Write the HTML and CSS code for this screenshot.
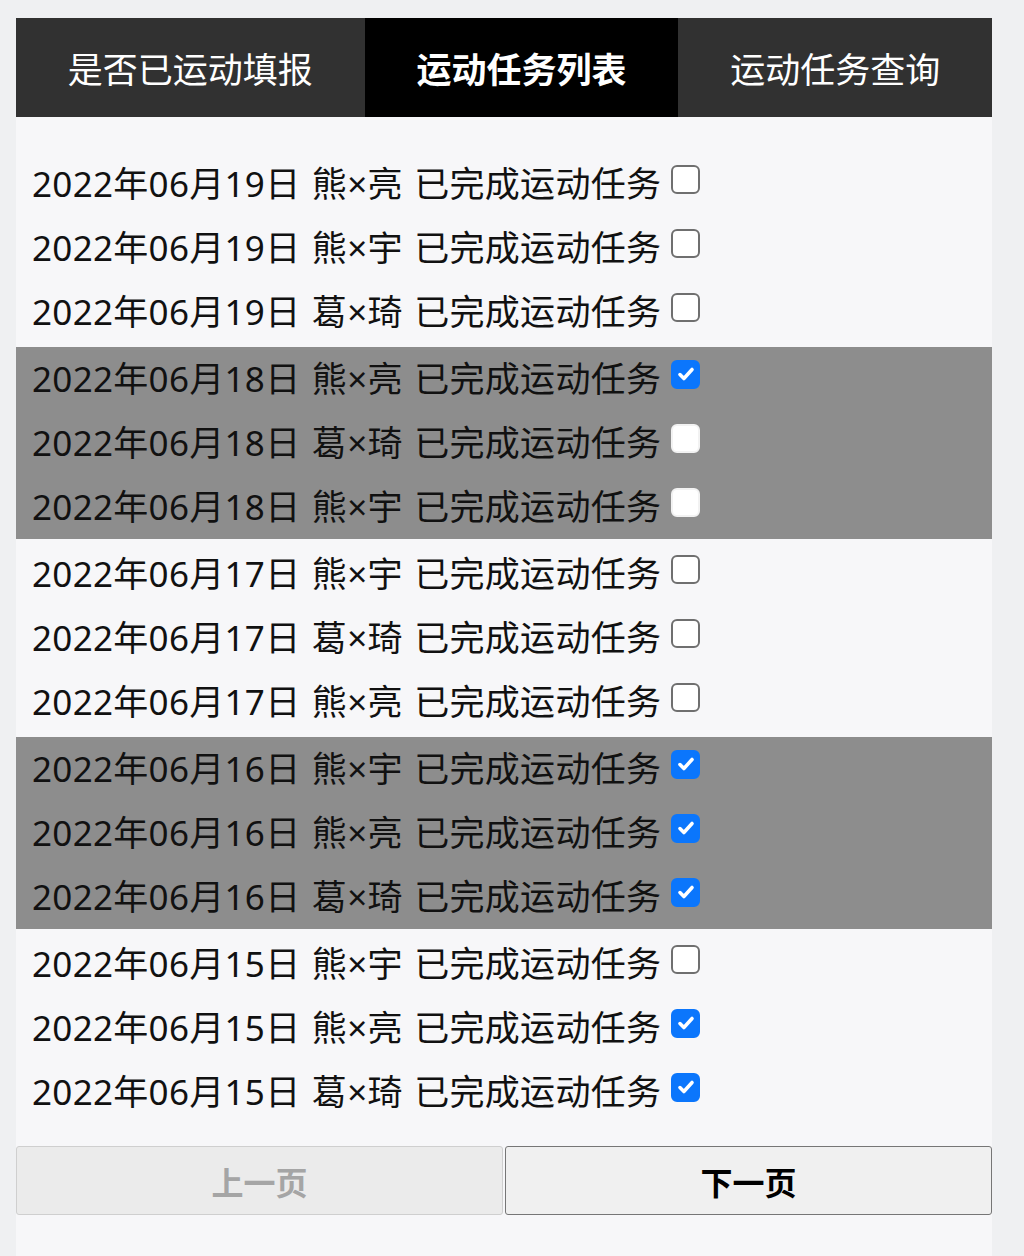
FILE: index.html
```html
<!DOCTYPE html>
<html lang="zh-CN">
<head>
<meta charset="utf-8">
<title>运动任务列表</title>
<link rel="stylesheet" href="styles.css">
</head>
<body>
<div class="app">
  <nav class="tabs">
    <div class="tab">是否已运动填报</div>
    <div class="tab active">运动任务列表</div>
    <div class="tab">运动任务查询</div>
  </nav>
  <div class="list">
    <div class="group">
      <div class="row"><span>2022年06月19日 熊×亮 已完成运动任务</span><span class="box"></span></div>
      <div class="row"><span>2022年06月19日 熊×宇 已完成运动任务</span><span class="box"></span></div>
      <div class="row"><span>2022年06月19日 葛×琦 已完成运动任务</span><span class="box"></span></div>
    </div>
    <div class="group shaded">
      <div class="row"><span>2022年06月18日 熊×亮 已完成运动任务</span><span class="box checked"><svg viewBox="0 0 20 20"><path d="M4.5 10.5l3.6 3.6 7.4-8.2" /></svg></span></div>
      <div class="row"><span>2022年06月18日 葛×琦 已完成运动任务</span><span class="box"></span></div>
      <div class="row"><span>2022年06月18日 熊×宇 已完成运动任务</span><span class="box"></span></div>
    </div>
    <div class="group">
      <div class="row"><span>2022年06月17日 熊×宇 已完成运动任务</span><span class="box"></span></div>
      <div class="row"><span>2022年06月17日 葛×琦 已完成运动任务</span><span class="box"></span></div>
      <div class="row"><span>2022年06月17日 熊×亮 已完成运动任务</span><span class="box"></span></div>
    </div>
    <div class="group shaded">
      <div class="row"><span>2022年06月16日 熊×宇 已完成运动任务</span><span class="box checked"><svg viewBox="0 0 20 20"><path d="M4.5 10.5l3.6 3.6 7.4-8.2" /></svg></span></div>
      <div class="row"><span>2022年06月16日 熊×亮 已完成运动任务</span><span class="box checked"><svg viewBox="0 0 20 20"><path d="M4.5 10.5l3.6 3.6 7.4-8.2" /></svg></span></div>
      <div class="row"><span>2022年06月16日 葛×琦 已完成运动任务</span><span class="box checked"><svg viewBox="0 0 20 20"><path d="M4.5 10.5l3.6 3.6 7.4-8.2" /></svg></span></div>
    </div>
    <div class="group">
      <div class="row"><span>2022年06月15日 熊×宇 已完成运动任务</span><span class="box"></span></div>
      <div class="row"><span>2022年06月15日 熊×亮 已完成运动任务</span><span class="box checked"><svg viewBox="0 0 20 20"><path d="M4.5 10.5l3.6 3.6 7.4-8.2" /></svg></span></div>
      <div class="row"><span>2022年06月15日 葛×琦 已完成运动任务</span><span class="box checked"><svg viewBox="0 0 20 20"><path d="M4.5 10.5l3.6 3.6 7.4-8.2" /></svg></span></div>
    </div>
  </div>
  <div class="pager">
    <button class="btn" disabled>上一页</button>
    <button class="btn">下一页</button>
  </div>
</div>
</body>
</html>
```
FILE: styles.css
```css
html, body {
  margin: 0;
  padding: 0;
  background: #eff0f2;
}
body {
  padding: 18px 32px 0 16px;
  font-family: "Noto Sans", "Noto Sans CJK SC", sans-serif;
  color: #111;
}
.app {
  background: #f7f7f9;
  min-height: 1238px;
  padding-bottom: 41px;
  box-sizing: border-box;
}
.tabs {
  display: flex;
  height: 99px;
  background: #333;
}
.tab {
  flex: 1 1 auto;
  padding: 0 50px;
  display: flex;
  align-items: center;
  justify-content: center;
  color: #fff;
  font-size: 35px;
  font-family: "Noto Sans CJK SC", sans-serif;
  background: #313131;
  white-space: nowrap;
}
.tab.active {
  background: #000;
  font-weight: 700;
}
.list {
  display: flex;
  flex-direction: column;
  gap: 3px;
  padding-top: 35px;
}
.group.shaded {
  background: #8d8d8d;
}
.row {
  height: 64px;
  box-sizing: border-box;
  display: flex;
  align-items: center;
  padding-left: 16px;
  padding-bottom: 6px;
  font-size: 35px;
  letter-spacing: 0.3px;
  word-spacing: 2px;
  white-space: nowrap;
}
.box {
  width: 25px;
  height: 25px;
  margin-left: 10px;
  margin-top: -4px;
  border: 2px solid #6f6f6f;
  border-radius: 6px;
  background: #fff;
  display: inline-flex;
  align-items: center;
  justify-content: center;
}
.shaded .box {
  border-color: #f2f2f2;
}
.box.checked {
  background: #0b76fc;
  border-color: #0b76fc;
}
.box svg {
  width: 22px;
  height: 22px;
  fill: none;
  stroke: #fff;
  stroke-width: 3.2;
  stroke-linecap: round;
  stroke-linejoin: round;
}
.pager {
  display: flex;
  gap: 2px;
  margin-top: 22px;
}
.btn {
  flex: 1 1 0;
  height: 69px;
  font-family: "Noto Sans CJK SC", sans-serif;
  font-size: 32px;
  font-weight: 700;
  color: #000;
  background: #f0f0f0;
  border: 1px solid #767676;
  border-radius: 3px;
}
.btn:disabled {
  color: #a5a5a5;
  background: #ebebeb;
  border-color: #cfcfcf;
}
```
